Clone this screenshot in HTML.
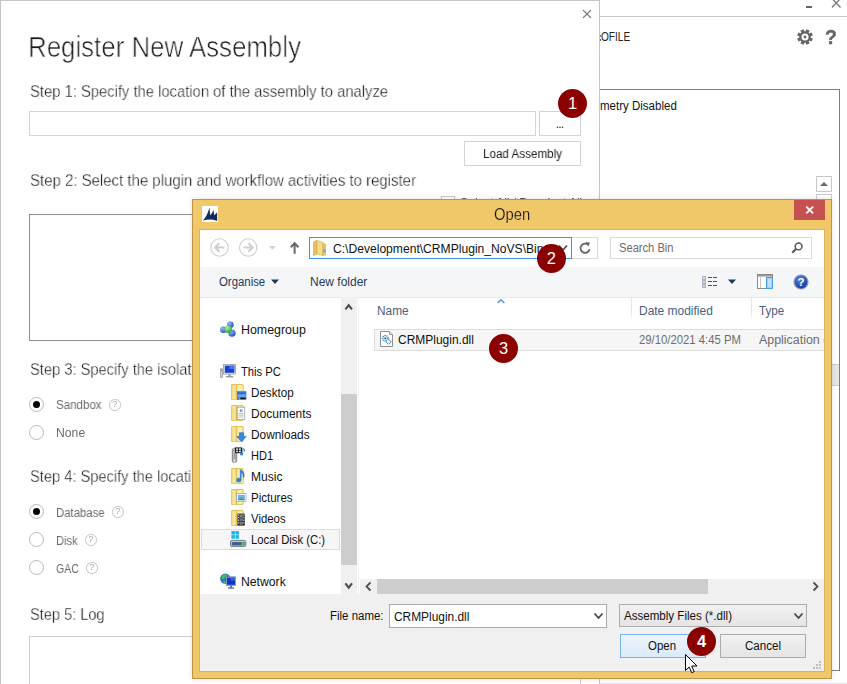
<!DOCTYPE html>
<html><head><meta charset="utf-8"><title>Open</title>
<style>
html,body{margin:0;padding:0;background:#fff;width:847px;height:684px;overflow:hidden;}
#root{width:847px;height:684px;overflow:hidden;position:relative;font-family:"Liberation Sans",sans-serif;background:#fff;}
.a{position:absolute;box-sizing:border-box;}
.t{position:absolute;white-space:pre;transform-origin:0 0;line-height:normal;font-family:"Liberation Sans",sans-serif;}
.badge{position:absolute;width:29.4px;height:29.4px;border-radius:50%;background:#8b0000;color:#fff;font-size:16.5px;text-align:center;line-height:29.6px;font-family:"Liberation Sans",sans-serif;}
.radio{position:absolute;width:15px;height:15px;border-radius:50%;border:1px solid #b9b9b9;box-sizing:border-box;background:#fff;}
.radio.on::after{content:"";position:absolute;left:3px;top:3px;width:7px;height:7px;border-radius:50%;background:#000;}
.q{position:absolute;width:11.5px;height:11.5px;border-radius:50%;border:1px solid #c2c2c2;box-sizing:border-box;color:#a6a6a6;font-size:9px;line-height:9.5px;text-align:center;will-change:transform;font-family:"Liberation Sans",sans-serif;}
.btn{position:absolute;box-sizing:border-box;border:1px solid #acacac;background:linear-gradient(#f1f1f1,#e4e4e4);}
</style></head>
<body>
<div id="root">
<!-- ===== background main window ===== -->
<div class="a" style="left:600px;top:16px;width:247px;height:1px;background:#c6c6c6"></div>
<div class="a" style="left:806px;top:6.2px;width:6px;height:1.6px;background:#666"></div>
<svg class="a" style="left:828px;top:0" width="16" height="10"><path d="M4 -1.5 L12.5 7.5 M12.5 -1.5 L4 7.5" stroke="#777" stroke-width="1.3" fill="none"/></svg>
<!-- gear -->
<svg class="a" style="left:796px;top:28px" width="18" height="18" viewBox="-9 -9 18 18">
 <g fill="#666" transform="rotate(22.5)">
  <circle r="5.7"/>
  <rect x="-1.7" y="-7.8" width="3.4" height="15.6"/><rect x="-1.7" y="-7.8" width="3.4" height="15.6" transform="rotate(45)"/><rect x="-1.7" y="-7.8" width="3.4" height="15.6" transform="rotate(90)"/><rect x="-1.7" y="-7.8" width="3.4" height="15.6" transform="rotate(135)"/>
 </g>
 <circle r="3.5" fill="#fff"/><circle r="1.4" fill="#666"/>
</svg>
<span class="t" style="left:824.8px;top:25.6px;font-size:19.5px;font-weight:bold;color:#666;-webkit-text-stroke:0.4px #666;will-change:transform">?</span>
<!-- panel -->
<div class="a" style="left:560px;top:89px;width:280px;height:582px;border:1px solid #7d7d7d;background:#fff"></div>
<!-- scroll bits -->
<div class="a" style="left:816px;top:176px;width:16px;height:16px;border:1px solid #c9c9c9;background:#fff"></div>
<svg class="a" style="left:816px;top:176px" width="16" height="16"><path d="M4 10 L8 6 L12 10 Z" fill="#666"/></svg>
<div class="a" style="left:816px;top:194px;width:16px;height:16px;border:1px solid #c9c9c9;background:#fff"></div>
<div class="a" style="left:832px;top:364px;width:7px;height:22px;background:#e6e6e6;border-top:1px solid #cfcfcf;border-bottom:1px solid #cfcfcf"></div>

<div class="a" style="left:600px;top:683px;width:247px;height:1px;background:#e3e3e3"></div>
<!-- ===== Register New Assembly modal ===== -->
<div class="a" id="modal" style="left:0;top:0;width:600px;height:700px;background:#fff;border:1px solid #c6c6c6;"></div>
<svg class="a" style="left:580px;top:7px" width="14" height="14"><path d="M3 3 L11 11 M11 3 L3 11" stroke="#7a7a7a" stroke-width="1.1" fill="none"/></svg>
<div class="a" style="left:29px;top:111px;width:507px;height:25px;border:1px solid #d4d4d4;background:#fff"></div>
<div class="a" style="left:539px;top:111px;width:42px;height:25px;border:1px solid #d4d4d4;background:#fff"></div>
<svg class="a" style="left:555px;top:125px" width="10" height="4"><g fill="#3a3a3a"><rect x="1.8" y="1.6" width="1.3" height="1.4"/><rect x="4.3" y="1.6" width="1.3" height="1.4"/><rect x="6.8" y="1.6" width="1.3" height="1.4"/></g></svg>
<div class="a" style="left:464px;top:141px;width:117px;height:25px;border:1px solid #d4d4d4;background:#fff"></div>
<!-- select all checkbox (mostly hidden) -->
<div class="a" style="left:441px;top:196px;width:14px;height:14px;border:1px solid #c9c9c9;background:#fff"></div>
<span class="t" style="left:460px;top:195.6px;font-size:12.5px;color:#555;letter-spacing:-0.2px;will-change:transform">Select All / Deselect All</span>
<!-- listbox -->
<div class="a" style="left:29px;top:214px;width:552px;height:127px;border:1px solid #8b8f98;background:#fff"></div>
<!-- radios -->
<div class="radio on" style="left:29px;top:397px"></div>
<div class="radio" style="left:29px;top:425px"></div>
<div class="radio on" style="left:29px;top:504px"></div>
<div class="radio" style="left:29px;top:532px"></div>
<div class="radio" style="left:29px;top:560px"></div>
<div class="q" style="left:109.05px;top:398.5px">?</div>
<div class="q" style="left:112.15px;top:506.2px">?</div>
<div class="q" style="left:85.25px;top:534.3px">?</div>
<div class="q" style="left:86.35px;top:562px">?</div>
<!-- log box -->
<div class="a" style="left:29px;top:636px;width:552px;height:80px;border:1px solid #cfcfcf;background:#fff"></div>
<span class="t" style="left:28.4px;top:31.1px;font-size:28.6px;color:#1c1c1c;transform:scaleX(0.9042);-webkit-text-stroke:0.65px #fff;will-change:transform;">Register New Assembly</span>
<span class="t" style="left:30.0px;top:82.5px;font-size:15.8px;color:#1c1c1c;transform:scaleX(0.9351);-webkit-text-stroke:0.3px #fff;will-change:transform;">Step 1: Specify the location of the assembly to analyze</span>
<span class="t" style="left:483.0px;top:146.7px;font-size:12.5px;color:#1e1e1e;transform:scaleX(0.9318);will-change:transform;">Load Assembly</span>
<span class="t" style="left:30.0px;top:171.5px;font-size:15.8px;color:#1c1c1c;transform:scaleX(0.9474);-webkit-text-stroke:0.3px #fff;will-change:transform;">Step 2: Select the plugin and workflow activities to register</span>
<span class="t" style="left:30.0px;top:360.5px;font-size:15.8px;color:#1c1c1c;transform:scaleX(0.9283);-webkit-text-stroke:0.3px #fff;will-change:transform;">Step 3: Specify the isolat</span>
<span class="t" style="left:56.2px;top:398.1px;font-size:12px;color:#6a6a6a;transform:scaleX(0.9625);will-change:transform;">Sandbox</span>
<span class="t" style="left:55.8px;top:426.1px;font-size:12px;color:#6a6a6a;transform:scaleX(1.0179);will-change:transform;">None</span>
<span class="t" style="left:30.0px;top:467.5px;font-size:15.8px;color:#1c1c1c;transform:scaleX(0.9271);-webkit-text-stroke:0.3px #fff;will-change:transform;">Step 4: Specify the locati</span>
<span class="t" style="left:56.4px;top:505.5px;font-size:12px;color:#6a6a6a;transform:scaleX(0.9460);will-change:transform;">Database</span>
<span class="t" style="left:56.4px;top:533.5px;font-size:12px;color:#6a6a6a;transform:scaleX(0.9296);will-change:transform;">Disk</span>
<span class="t" style="left:56.2px;top:561.5px;font-size:12px;color:#6a6a6a;transform:scaleX(0.8802);will-change:transform;">GAC</span>
<span class="t" style="left:30.0px;top:605.5px;font-size:15.8px;color:#1c1c1c;transform:scaleX(0.9219);-webkit-text-stroke:0.3px #fff;will-change:transform;">Step 5: Log</span>

<!-- ===== Open dialog ===== -->
<div class="a" id="dlg" style="left:192px;top:199px;width:640px;height:480px;background:#f0c869;border:1px solid #bb964a;box-shadow:0 0 5px rgba(0,0,0,0.13);"></div>
<!-- title icon -->
<svg class="a" style="left:202px;top:206px" width="16" height="16" viewBox="0 0 16 16"><rect width="16" height="16" fill="#fff"/><path d="M0.9 14.6 Q5.6 9.6 7.4 1.6 L8.2 9.2 Q10.4 7 11.5 4 L12.2 9.2 Q14 8 15.1 6.3 L15.2 14.9 Q8 12.4 0.9 14.6 Z" fill="#0f2a5e"/></svg>
<!-- close btn -->
<div class="a" style="left:794px;top:200px;width:31px;height:20px;background:#c75050"></div>
<svg class="a" style="left:794px;top:200px" width="31" height="20"><path d="M12.3 6.6 L19.1 13.4 M19.1 6.6 L12.3 13.4" stroke="#fff" stroke-width="1.9" fill="none"/></svg>
<!-- client area -->
<div class="a" style="left:199px;top:229px;width:626px;height:443px;background:#d9b25a"></div>
<div class="a" id="client" style="left:200px;top:230px;width:624px;height:441px;background:#fff;overflow:hidden"></div>
<!-- nav row -->
<svg class="a" style="left:209px;top:237.4px" width="100" height="22">
 <g fill="none" stroke="#cdcdcd" stroke-width="1.1">
  <circle cx="10.5" cy="10.5" r="8.7"/><circle cx="39.2" cy="10.5" r="8.7"/>
 </g>
 <g fill="none" stroke="#d0d0d0" stroke-width="2.1">
  <path d="M6 10.5 H15.4 M10.3 6.3 L6.1 10.5 L10.3 14.7"/>
  <path d="M34.4 10.5 H43.8 M39.5 6.3 L43.7 10.5 L39.5 14.7"/>
 </g>
 <path d="M59.8 9 L67 9 L63.4 12.7 Z" fill="#d2d2d2"/>
 <path d="M85.6 16.8 V6.4 M81.8 10.3 L85.6 6.2 L89.4 10.3" stroke="#666" stroke-width="2" fill="none"/>
</svg>
<!-- address box -->
<div class="a" style="left:309px;top:237px;width:263px;height:22px;border:1px solid #3d90e3;background:#fff"></div>
<svg class="a" style="left:313px;top:240px" width="14" height="16" viewBox="0 0 14 16">
 <path d="M0.5 2 L4 0.5 L4 14 L0.5 15.5 Z" fill="#e8c35a" stroke="#c9a03a" stroke-width="0.6"/>
 <path d="M4 0.5 L10 2.2 L10 15.5 L4 14 Z" fill="#f5dc8a" stroke="#d3ac47" stroke-width="0.6"/>
 <path d="M10 3.5 L12.5 4 L12.5 15 L10 15.5 Z" fill="#e9c865" stroke="#c9a03a" stroke-width="0.5"/>
 <rect x="10.4" y="9.2" width="2" height="3.2" fill="#5fa8e6"/>
</svg>
<svg class="a" style="left:556.5px;top:243px" width="12" height="10"><path d="M2 2.5 L6 7 L10 2.5" stroke="#444" stroke-width="1.5" fill="none"/></svg>
<!-- refresh -->
<div class="a" style="left:572px;top:237px;width:26px;height:22px;border:1px solid #d9d9d9;border-left:none;background:#fff"></div>
<svg class="a" style="left:578px;top:241px" width="14" height="14" viewBox="0 0 14 14"><path d="M10.6 4.2 A4.6 4.6 0 1 0 11.6 8.2" stroke="#666" stroke-width="1.8" fill="none"/><path d="M7.4 1 L11.8 1.4 L10.6 5.4 Z" fill="#6a6a6a"/></svg>
<!-- search -->
<div class="a" style="left:610px;top:237px;width:202px;height:22px;border:1px solid #d9d9d9;background:#fff"></div>
<svg class="a" style="left:790px;top:241px" width="14" height="14"><circle cx="8.6" cy="5.4" r="3.4" stroke="#555" stroke-width="1.5" fill="none"/><path d="M6.2 7.8 L2.2 11.8" stroke="#555" stroke-width="2"/></svg>
<!-- toolbar -->
<div class="a" style="left:200px;top:267px;width:624px;height:31px;background:#f5f6f7;border-bottom:1px solid #e6e7e9"></div>
<svg class="a" style="left:271px;top:279px" width="9" height="6"><path d="M0 0.5 L8 0.5 L4 5 Z" fill="#1e395b"/></svg>
<!-- view icon -->
<svg class="a" style="left:702px;top:275px" width="16" height="14">
 <g fill="#fff" stroke="#a9b3c1" stroke-width="1"><rect x="0.5" y="1.5" width="3" height="3"/><rect x="0.5" y="5.5" width="3" height="3"/><rect x="0.5" y="9.5" width="3" height="3"/></g>
 <rect x="1.5" y="2.5" width="1" height="1" fill="#3a9a3a"/><rect x="1.5" y="6.5" width="1" height="1" fill="#d03030"/><rect x="1.5" y="10.5" width="1" height="1" fill="#3050d0"/>
 <g fill="#44546a"><rect x="6" y="2" width="4" height="1"/><rect x="11" y="2" width="4" height="1"/><rect x="6" y="6" width="4" height="1"/><rect x="11" y="6" width="4" height="1"/><rect x="6" y="10" width="4" height="1"/><rect x="11" y="10" width="4" height="1"/></g>
</svg>
<svg class="a" style="left:727.6px;top:279.4px" width="9" height="6"><path d="M0 0.5 L8 0.5 L4 5 Z" fill="#1e395b"/></svg>
<!-- preview pane icon -->
<svg class="a" style="left:757px;top:274px" width="17" height="16">
 <rect x="0.5" y="0.5" width="15" height="14" fill="#fff" stroke="#8c8c8c"/>
 <rect x="1" y="1" width="14" height="1.6" fill="#9a9a9a"/>
 <rect x="3" y="3" width="1" height="11" fill="#c9c9c9"/>
 <rect x="9.5" y="3.5" width="6" height="11" fill="#9fcdf7" stroke="#4a9fe8"/>
 <rect x="11" y="5" width="3" height="8" fill="#c4e1fb"/>
</svg>
<!-- help icon -->
<svg class="a" style="left:793px;top:274px" width="16" height="16"><defs><radialGradient id="hg" cx="0.4" cy="0.3" r="0.8"><stop offset="0" stop-color="#4f83dc"/><stop offset="1" stop-color="#0f2f9a"/></radialGradient></defs><circle cx="8" cy="8" r="7" fill="url(#hg)" stroke="#8f9ab3" stroke-width="1.2"/><text x="8" y="12.2" font-size="11.5" font-weight="bold" font-family="Liberation Sans, sans-serif" fill="#fff" text-anchor="middle">?</text></svg>

<!-- left nav scrollbar -->
<div class="a" style="left:341px;top:297px;width:16px;height:297px;background:#f0f0f0"></div>
<div class="a" style="left:358px;top:297px;width:1px;height:297px;background:#f3f3f3"></div>
<div class="a" style="left:341px;top:394px;width:16px;height:171px;background:#cdcdcd"></div>
<svg class="a" style="left:341px;top:297px" width="16" height="20"><path d="M4.4 12.4 L7.7 8.2 L11 12.4" stroke="#4f4f4f" stroke-width="2.2" fill="none"/></svg>
<svg class="a" style="left:341px;top:576px" width="16" height="18"><path d="M4.4 7.4 L7.7 11.6 L11 7.4" stroke="#4f4f4f" stroke-width="2.2" fill="none"/></svg>
<!-- h scrollbar -->
<div class="a" style="left:360px;top:579px;width:464px;height:15px;background:#f0f0f0"></div>
<div class="a" style="left:377px;top:579px;width:331px;height:15px;background:#cdcdcd"></div>
<svg class="a" style="left:360px;top:579px" width="17" height="15"><path d="M10.5 3.5 L6.5 7.5 L10.5 11.5" stroke="#505050" stroke-width="1.8" fill="none"/></svg>
<svg class="a" style="left:807px;top:579px" width="17" height="15"><path d="M6.5 3.5 L10.5 7.5 L6.5 11.5" stroke="#505050" stroke-width="1.8" fill="none"/></svg>
<!-- bottom pane -->
<div class="a" style="left:200px;top:594px;width:624px;height:77px;background:#f0f0f0"></div>
<!-- headers -->
<div class="a" style="left:631px;top:298px;width:1px;height:23px;background:linear-gradient(#dfe6ee 60%,#fff)"></div>
<div class="a" style="left:751px;top:298px;width:1px;height:23px;background:linear-gradient(#dfe6ee 60%,#fff)"></div>
<svg class="a" style="left:496px;top:298px" width="10" height="6"><path d="M1.6 5 L5 1.8 L8.4 5" stroke="#6a98d4" stroke-width="1.7" fill="none"/></svg>
<!-- selected row -->
<div class="a" style="left:374px;top:329px;width:450px;height:22px;background:#f6f6f6;border:1px solid #dcdcdc;border-right:none"></div>
<!-- dll icon -->
<svg class="a" style="left:380px;top:331px" width="13" height="16" viewBox="0 0 13 16">
 <path d="M0.5 0.5 H9.5 L12.5 3.5 V15.5 H0.5 Z" fill="#fff" stroke="#8e8e8e"/>
 <path d="M9.5 0.5 V3.5 H12.5" fill="#f2f2f2" stroke="#9a9a9a"/>
 <circle cx="5.3" cy="7.3" r="2.8" fill="#dff0fa" stroke="#2f6ea3" stroke-width="1.3" stroke-dasharray="1.1 0.9"/>
 <circle cx="5.3" cy="7.3" r="0.9" fill="#1a2f6a"/>
 <circle cx="8.5" cy="10.7" r="2.2" fill="#eef7fc" stroke="#3f86bb" stroke-width="1.2" stroke-dasharray="1 0.7"/>
</svg>
<!-- local disk highlight -->
<div class="a" style="left:201px;top:529px;width:139px;height:21px;background:#f6f6f6;border:1px solid #dcdcdc"></div>
<svg width="0" height="0" style="position:absolute"><defs>
<linearGradient id="fg" x1="0" x2="1"><stop offset="0" stop-color="#f0d878"/><stop offset="0.5" stop-color="#f6eaa2"/><stop offset="1" stop-color="#ecd070"/></linearGradient>
<radialGradient id="bs" cx="0.35" cy="0.3" r="0.8"><stop offset="0" stop-color="#8fb8ff"/><stop offset="1" stop-color="#1b47b8"/></radialGradient>
<radialGradient id="gs" cx="0.35" cy="0.3" r="0.8"><stop offset="0" stop-color="#b5f5a0"/><stop offset="1" stop-color="#1f9a28"/></radialGradient>
<linearGradient id="dev" x1="0" x2="1"><stop offset="0" stop-color="#8a8a8a"/><stop offset="0.5" stop-color="#e6e6e6"/><stop offset="1" stop-color="#8a8a8a"/></linearGradient>
</defs></svg>
<svg class="a" style="left:220px;top:321px" width="16" height="16" viewBox="0 0 16 16"><circle cx="10.4" cy="3.8" r="3.3" fill="url(#bs)"/><circle cx="3.4" cy="8.8" r="3.3" fill="url(#bs)"/><circle cx="12" cy="12.2" r="3.6" fill="url(#bs)"/><circle cx="8.2" cy="8.2" r="3.7" fill="url(#gs)"/></svg>
<svg class="a" style="left:220px;top:364px" width="16" height="16" viewBox="0 0 16 16"><rect x="3.6" y="0.5" width="12" height="9.6" fill="#e3e6ea" stroke="#8b9097" stroke-width="0.7"/>
<rect x="4.8" y="1.6" width="9.6" height="7.2" fill="#1a3fd0"/><rect x="9.6" y="1.6" width="4.8" height="3.4" fill="#4a78e8"/>
<rect x="8.2" y="10.2" width="2.8" height="2" fill="#a9adb3"/><rect x="6" y="12.1" width="7.2" height="1.3" fill="#8f949b"/>
<rect x="0.3" y="4.6" width="2.2" height="9" rx="0.6" fill="#c9ccd1" stroke="#7d8289" stroke-width="0.6"/><rect x="0.9" y="5.4" width="1" height="1.4" fill="#39b54a"/></svg>
<svg class="a" style="left:231px;top:384px" width="16" height="16" viewBox="0 0 16 16"><rect x="0.4" y="0.5" width="11.8" height="15.2" rx="0.6" fill="#f4e69b" stroke="#e3ba4f" stroke-width="0.9"/>
<rect x="0.9" y="1" width="4.6" height="14.2" fill="url(#fg)"/>
<rect x="5.2" y="0.6" width="1" height="15" fill="#e2b84c"/>
<rect x="6.6" y="1.6" width="4.6" height="13" fill="#f8efb4"/><rect x="6" y="7.2" width="9.4" height="8.6" fill="#5f7fae"/><rect x="6.6" y="7.8" width="8.2" height="5.6" fill="#2f6fe0"/><rect x="6.6" y="10.4" width="8.2" height="3" fill="#58aef5"/><rect x="9.4" y="13.6" width="5.2" height="1.5" fill="#0c0f14"/><rect x="6.8" y="13.4" width="1.2" height="1.2" fill="#e05a20"/><rect x="8" y="13.4" width="1.2" height="1.2" fill="#58b030"/><rect x="6.8" y="14.6" width="1.2" height="1" fill="#3078e0"/><rect x="8" y="14.6" width="1.2" height="1" fill="#f0c020"/></svg>
<svg class="a" style="left:231px;top:405px" width="16" height="16" viewBox="0 0 16 16"><rect x="0.4" y="0.5" width="11.8" height="15.2" rx="0.6" fill="#f4e69b" stroke="#e3ba4f" stroke-width="0.9"/>
<rect x="0.9" y="1" width="4.6" height="14.2" fill="url(#fg)"/>
<rect x="5.2" y="0.6" width="1" height="15" fill="#e2b84c"/>
<rect x="6.6" y="1.6" width="4.6" height="13" fill="#f8efb4"/><rect x="6.2" y="2.2" width="7.6" height="12.4" fill="#fff" stroke="#8e959e" stroke-width="0.7"/><rect x="8.8" y="4.4" width="2.6" height="2.4" fill="#5b9be8"/><g fill="#a9afb8"><rect x="7.4" y="8" width="5.2" height="0.8"/><rect x="7.4" y="9.8" width="5.2" height="0.8"/><rect x="7.4" y="11.6" width="5.2" height="0.8"/></g></svg>
<svg class="a" style="left:231px;top:426px" width="16" height="16" viewBox="0 0 16 16"><rect x="0.4" y="0.5" width="11.8" height="15.2" rx="0.6" fill="#f4e69b" stroke="#e3ba4f" stroke-width="0.9"/>
<rect x="0.9" y="1" width="4.6" height="14.2" fill="url(#fg)"/>
<rect x="5.2" y="0.6" width="1" height="15" fill="#e2b84c"/>
<rect x="6.6" y="1.6" width="4.6" height="13" fill="#f8efb4"/><path d="M8.4 6.8 H12.6 V10.6 H15.2 L10.5 15.6 L5.8 10.6 H8.4 Z" fill="#2f8be6" stroke="#1c62b8" stroke-width="0.6"/></svg>
<svg class="a" style="left:231px;top:447px" width="16" height="16" viewBox="0 0 16 16"><rect x="1.2" y="1.4" width="4.6" height="14" rx="1.6" fill="url(#dev)" stroke="#6e6e6e" stroke-width="0.6"/>
<rect x="2.6" y="6" width="1.8" height="6.4" rx="0.8" fill="#9a9a9a"/>
<rect x="3.8" y="0.4" width="7.4" height="5.8" fill="#1d1d1d"/><g fill="#e9efe9"><rect x="5.2" y="1.4" width="1.9" height="1.5"/><rect x="8" y="1.4" width="1.9" height="1.5"/><rect x="5.2" y="3.7" width="1.9" height="1.5"/><rect x="8" y="3.7" width="1.9" height="1.5"/></g><rect x="2" y="3" width="1.4" height="1.2" fill="#3ec44a"/>
<path d="M11.6 1 C13.6 1.6 14.4 3.2 14.2 5 L13.4 4.8 C13.4 3.8 12.8 3 12.2 2.8 V7.2 A1.6 1.4 0 1 1 11.6 6 Z" fill="#2a86e2"/></svg>
<svg class="a" style="left:231px;top:468px" width="16" height="16" viewBox="0 0 16 16"><rect x="0.4" y="0.5" width="11.8" height="15.2" rx="0.6" fill="#f4e69b" stroke="#e3ba4f" stroke-width="0.9"/>
<rect x="0.9" y="1" width="4.6" height="14.2" fill="url(#fg)"/>
<rect x="5.2" y="0.6" width="1" height="15" fill="#e2b84c"/>
<rect x="6.6" y="1.6" width="4.6" height="13" fill="#f8efb4"/><path d="M9.2 1.6 C12.6 2.8 13.8 6 13 9.4 L12 9 C12.4 6.8 11.4 5.2 10.2 4.6 V12.2 A2.3 2 0 1 1 9.2 10.4 Z" fill="#2a86e2" stroke="#1a5fb0" stroke-width="0.4"/></svg>
<svg class="a" style="left:231px;top:489px" width="16" height="16" viewBox="0 0 16 16"><rect x="0.4" y="0.5" width="11.8" height="15.2" rx="0.6" fill="#f4e69b" stroke="#e3ba4f" stroke-width="0.9"/>
<rect x="0.9" y="1" width="4.6" height="14.2" fill="url(#fg)"/>
<rect x="5.2" y="0.6" width="1" height="15" fill="#e2b84c"/>
<rect x="6.6" y="1.6" width="4.6" height="13" fill="#f8efb4"/><rect x="5.6" y="4.6" width="9.4" height="7.8" fill="#fff" stroke="#9aa1aa" stroke-width="0.7"/><rect x="6.8" y="5.8" width="7" height="5.4" fill="#6fb1ee"/><path d="M6.8 11.2 L9.4 8.4 L11.2 10 L12.4 9 L13.8 11.2 Z" fill="#5c9a4a"/></svg>
<svg class="a" style="left:231px;top:510px" width="16" height="16" viewBox="0 0 16 16"><rect x="0.4" y="0.5" width="11.8" height="15.2" rx="0.6" fill="#f4e69b" stroke="#e3ba4f" stroke-width="0.9"/>
<rect x="0.9" y="1" width="4.6" height="14.2" fill="url(#fg)"/>
<rect x="5.2" y="0.6" width="1" height="15" fill="#e2b84c"/>
<rect x="6.6" y="1.6" width="4.6" height="13" fill="#f8efb4"/><rect x="6.4" y="3.6" width="7.4" height="12" fill="#2b2b2b"/><g fill="#e8e8e8"><rect x="6.9" y="4.4" width="1" height="1.2"/><rect x="6.9" y="7" width="1" height="1.2"/><rect x="6.9" y="9.6" width="1" height="1.2"/><rect x="6.9" y="12.2" width="1" height="1.2"/><rect x="12.3" y="4.4" width="1" height="1.2"/><rect x="12.3" y="7" width="1" height="1.2"/><rect x="12.3" y="9.6" width="1" height="1.2"/><rect x="12.3" y="12.2" width="1" height="1.2"/></g><rect x="8.4" y="4.4" width="3.4" height="3.2" fill="#7a8a6a"/><rect x="8.4" y="8.2" width="3.4" height="3.2" fill="#5a7a9a"/><rect x="8.4" y="12" width="3.4" height="2.8" fill="#8a7a5a"/></svg>
<svg class="a" style="left:230px;top:531px" width="17" height="16" viewBox="0 0 17 16"><g fill="#19b5f1"><rect x="1.4" y="0" width="3.5" height="3.6"/><rect x="5.4" y="0" width="3.5" height="3.6"/><rect x="1.4" y="4.1" width="3.5" height="3.6"/><rect x="5.4" y="4.1" width="3.5" height="3.6"/></g>
<rect x="0.5" y="9.4" width="15.4" height="6.2" rx="1.6" fill="#c3c8ce" stroke="#6a7079" stroke-width="0.9"/><rect x="1.8" y="11" width="12.8" height="3.4" rx="0.6" fill="#4a6a8e"/><rect x="2.4" y="11.6" width="8.6" height="2.2" fill="#3a5f9a"/><rect x="11.6" y="11.4" width="2" height="2.6" fill="#48d848"/></svg>
<svg class="a" style="left:220px;top:573px" width="16" height="16" viewBox="0 0 16 16"><circle cx="5.3" cy="5.6" r="5.2" fill="#2a6fd8"/><path d="M1.6 3.6 C3 0.8 6.4 0.8 7.4 2.6 C6.2 4.6 4 4 4 6.8 C2.4 6.6 1 5.4 1.6 3.6 Z" fill="#3ec43e"/><path d="M3 8.4 C4.2 7.6 5.6 8.2 5.8 9.6 L4.4 10.4 Z" fill="#3ec43e"/>
<rect x="6.2" y="3.8" width="9.6" height="8.8" fill="#aeb8d0" stroke="#6c7aa8" stroke-width="0.6"/><rect x="7" y="4.6" width="8" height="7.2" fill="#1433c8"/><rect x="10.6" y="4.6" width="4.4" height="3" fill="#3a5fe0"/><rect x="10" y="12.6" width="2" height="2" fill="#5a6ab0"/><rect x="8" y="14.4" width="6" height="1.2" fill="#3f57b0"/></svg>
<!-- file name combo -->
<div class="a" style="left:389px;top:604px;width:218px;height:24px;border:1px solid #ababab;background:#fff"></div>
<svg class="a" style="left:592px;top:611px" width="13" height="10"><path d="M2.5 2.5 L6.5 7 L10.5 2.5" stroke="#444" stroke-width="1.7" fill="none"/></svg>
<!-- filter combo -->
<div class="btn" style="left:619px;top:604px;width:188px;height:23px;"></div>
<svg class="a" style="left:792px;top:611px" width="13" height="10"><path d="M2.5 2.5 L6.5 7 L10.5 2.5" stroke="#444" stroke-width="1.7" fill="none"/></svg>
<!-- buttons -->
<div class="btn" style="left:620px;top:634px;width:86px;height:24px;border-color:#7ab1e9;background:linear-gradient(#ecf4fc,#dbeafb)"></div>
<div class="btn" style="left:720px;top:634px;width:86px;height:24px;"></div>
<!-- grip -->
<svg class="a" style="left:812px;top:660px" width="11" height="11"><g fill="#bdbdbd"><rect x="7" y="1" width="2" height="2"/><rect x="4" y="4" width="2" height="2"/><rect x="7" y="4" width="2" height="2"/><rect x="1" y="7" width="2" height="2"/><rect x="4" y="7" width="2" height="2"/><rect x="7" y="7" width="2" height="2"/></g></svg>
<div class="a" style="left:200px;top:230px;width:624px;height:441px;overflow:hidden;background:transparent">
<div style="position:absolute;left:-200px;top:-230px;width:847px;height:684px">
<span class="t" style="left:333.0px;top:242.3px;font-size:12px;color:#111;transform:scaleX(1.0083);">C:\Development\CRMPlugin_NoVS\Bin</span>
<span class="t" style="left:619.0px;top:240.7px;font-size:12px;color:#6d6d6d;transform:scaleX(0.9284);">Search Bin</span>
<span class="t" style="left:218.8px;top:274.9px;font-size:12px;color:#1e395b;transform:scaleX(0.9486);">Organise</span>
<span class="t" style="left:309.7px;top:274.9px;font-size:12px;color:#1e395b;transform:scaleX(0.9990);">New folder</span>
<span class="t" style="left:377.4px;top:303.8px;font-size:12px;color:#4c607a;transform:scaleX(0.9870);">Name</span>
<span class="t" style="left:638.5px;top:303.8px;font-size:12px;color:#4c607a;transform:scaleX(0.9967);">Date modified</span>
<span class="t" style="left:758.9px;top:303.8px;font-size:12px;color:#4c607a;transform:scaleX(0.9648);">Type</span>
<span class="t" style="left:398.3px;top:332.8px;font-size:12px;color:#111;transform:scaleX(0.9983);">CRMPlugin.dll</span>
<span class="t" style="left:638.5px;top:332.8px;font-size:12px;color:#6d6d6d;transform:scaleX(0.9436);">29/10/2021 4:45 PM</span>
<span class="t" style="left:758.9px;top:332.8px;font-size:12px;color:#6d6d6d;transform:scaleX(1.0347);">Application e</span>
<span class="t" style="left:241.2px;top:322.8px;font-size:12px;color:#111;transform:scaleX(1.0334);">Homegroup</span>
<span class="t" style="left:241.2px;top:364.8px;font-size:12px;color:#111;transform:scaleX(0.9324);">This PC</span>
<span class="t" style="left:251.4px;top:385.8px;font-size:12px;color:#111;transform:scaleX(0.9675);">Desktop</span>
<span class="t" style="left:251.4px;top:406.8px;font-size:12px;color:#111;transform:scaleX(0.9983);">Documents</span>
<span class="t" style="left:251.4px;top:427.8px;font-size:12px;color:#111;transform:scaleX(0.9869);">Downloads</span>
<span class="t" style="left:251.4px;top:448.8px;font-size:12px;color:#111;transform:scaleX(0.9202);">HD1</span>
<span class="t" style="left:251.4px;top:469.8px;font-size:12px;color:#111;transform:scaleX(1.0082);">Music</span>
<span class="t" style="left:251.4px;top:490.8px;font-size:12px;color:#111;transform:scaleX(0.9594);">Pictures</span>
<span class="t" style="left:251.4px;top:511.8px;font-size:12px;color:#111;transform:scaleX(0.9484);">Videos</span>
<span class="t" style="left:251.4px;top:532.8px;font-size:12px;color:#111;transform:scaleX(0.9417);">Local Disk (C:)</span>
<span class="t" style="left:241.2px;top:574.8px;font-size:12px;color:#111;transform:scaleX(1.0178);">Network</span>
<span class="t" style="left:330.0px;top:608.7px;font-size:12px;color:#111;transform:scaleX(0.9548);">File name:</span>
<span class="t" style="left:393.6px;top:610.3px;font-size:12px;color:#111;transform:scaleX(0.9917);">CRMPlugin.dll</span>
<span class="t" style="left:623.5px;top:608.7px;font-size:12px;color:#111;transform:scaleX(0.9640);">Assembly Files (*.dll)</span>
<span class="t" style="left:648.3px;top:638.7px;font-size:12px;color:#111;transform:scaleX(0.9537);">Open</span>
<span class="t" style="left:745.0px;top:638.7px;font-size:12px;color:#111;transform:scaleX(0.9636);">Cancel</span>
</div></div>
<span class="t" style="left:494.0px;top:205.2px;font-size:16.4px;color:#151515;transform:scaleX(0.9025);-webkit-text-stroke:0.2px #f0c869;">Open</span>
<span class="t" style="left:601.3px;top:29.5px;font-size:12.5px;color:#222;transform:scaleX(0.8083);">OFILE</span>
<span class="t" style="left:600.4px;top:98.5px;font-size:12.5px;color:#111;transform:scaleX(0.9211);">metry Disabled</span>

<div class="a" style="left:600px;top:35px;width:1.2px;height:1.6px;background:#777"></div><div class="a" style="left:600px;top:39.2px;width:1.4px;height:1.6px;background:#666"></div>
<!-- badges -->
<div class="badge" style="left:557.9px;top:88.8px">1</div>
<div class="badge" style="left:536.7px;top:243.6px">2</div>
<div class="badge" style="left:488.8px;top:333.7px">3</div>
<div class="badge" style="left:686.9px;top:626.8px;font-weight:bold">4</div>
<!-- cursor -->
<svg class="a" style="left:684px;top:653px" width="16" height="23" viewBox="0 0 16 23"><path d="M1.5 1.5 L1.5 17.5 L5.2 14 L7.7 19.7 L10.2 18.6 L7.7 13 L13 13 Z" fill="#fff" stroke="#000" stroke-width="1"/></svg>
</div>
</body></html>
